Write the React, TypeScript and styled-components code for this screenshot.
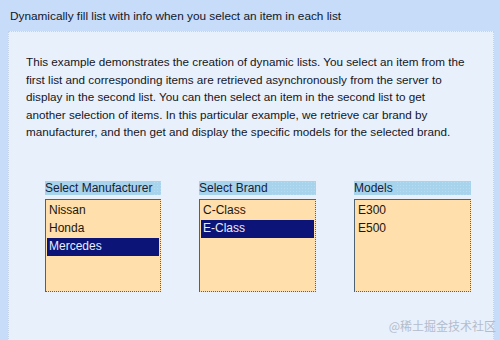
import React from 'react';
import styled, { createGlobalStyle } from 'styled-components';

const GlobalStyle = createGlobalStyle`
  html, body {
    margin: 0;
    padding: 0;
  }
  body {
    font-family: "Liberation Sans", Arial, sans-serif;
  }
`;

const Page = styled.div`
  position: relative;
  width: 500px;
  height: 340px;
  overflow: hidden;
  background: #c6dcf8;
  box-sizing: border-box;
  padding-top: 9px;
`;

const Title = styled.div`
  font-family: "Liberation Sans", Arial, sans-serif;
  font-size: 11.8px;
  line-height: 15px;
  color: #10182a;
  padding-left: 10px;
  height: 22px;
`;

const Panel = styled.div`
  margin-left: 8px;
  width: 486px;
  height: 330px;
  box-sizing: border-box;
  background: #e8f0fc;
  border: 1px dotted #c4d2e8;
  border-bottom: none;
  padding: 21px 0 0 17px;
`;

const Description = styled.p`
  margin: 0;
  font-family: "Liberation Sans", Arial, sans-serif;
  font-size: 11.7px;
  line-height: 17.5px;
  color: #14161c;
  white-space: nowrap;
`;

const Lists = styled.div`
  display: flex;
  gap: 38px;
  margin-top: 40px;
  padding-left: 19px;
`;

const Group = styled.div<{ $w: number }>`
  width: ${(p) => p.$w}px;
`;

const Header = styled.div`
  height: 14px;
  margin-bottom: 4px;
  background-color: #a8d3ec;
  background-image: radial-gradient(circle, #b8dcf0 0.6px, transparent 0.8px);
  background-size: 3px 3px;
  font-family: "Liberation Sans", Arial, sans-serif;
  font-size: 12px;
  line-height: 14px;
  color: #16213a;
`;

const HeaderText = styled.span`
  background: #a8d3ec;
  padding-right: 2px;
`;

const ListBox = styled.div`
  height: 93px;
  box-sizing: border-box;
  background: #ffdfab;
  border: 1px dotted #4e6272;
  border-top-style: solid;
  border-left-style: solid;
  padding: 2px 1px;
`;

const Item = styled.div<{ $selected?: boolean }>`
  height: 18px;
  line-height: 17px;
  padding-left: 2px;
  font-family: "Liberation Sans", Arial, sans-serif;
  font-size: 12px;
  color: ${(p) => (p.$selected ? '#e8ecff' : '#1b1710')};
  background: ${(p) => (p.$selected ? '#0c1478' : 'transparent')};
`;

const Watermark = styled.div`
  position: absolute;
  right: 4px;
  bottom: 6px;
  font-family: "Noto Sans CJK SC", sans-serif;
  font-size: 12px;
  color: #b4bccb;
`;

const lists = [
  { title: 'Select Manufacturer', w: 116, items: ['Nissan', 'Honda', 'Mercedes'], selected: 'Mercedes' },
  { title: 'Select Brand', w: 117, items: ['C-Class', 'E-Class'], selected: 'E-Class' },
  { title: 'Models', w: 117, items: ['E300', 'E500'], selected: '' },
];

export default function App() {
  return (
    <Page>
      <GlobalStyle />
      <Title>Dynamically fill list with info when you select an item in each list</Title>
      <Panel>
        <Description>
          This example demonstrates the creation of dynamic lists. You select an item from the
          <br />
          first list and corresponding items are retrieved asynchronously from the server to
          <br />
          display in the second list. You can then select an item in the second list to get
          <br />
          another selection of items. In this particular example, we retrieve car brand by
          <br />
          manufacturer, and then get and display the specific models for the selected brand.
        </Description>
        <Lists>
          {lists.map((l) => (
            <Group key={l.title} $w={l.w}>
              <Header>
                <HeaderText>{l.title}</HeaderText>
              </Header>
              <ListBox>
                {l.items.map((it) => (
                  <Item key={it} $selected={it === l.selected}>
                    {it}
                  </Item>
                ))}
              </ListBox>
            </Group>
          ))}
        </Lists>
      </Panel>
      <Watermark>@稀土掘金技术社区</Watermark>
    </Page>
  );
}
